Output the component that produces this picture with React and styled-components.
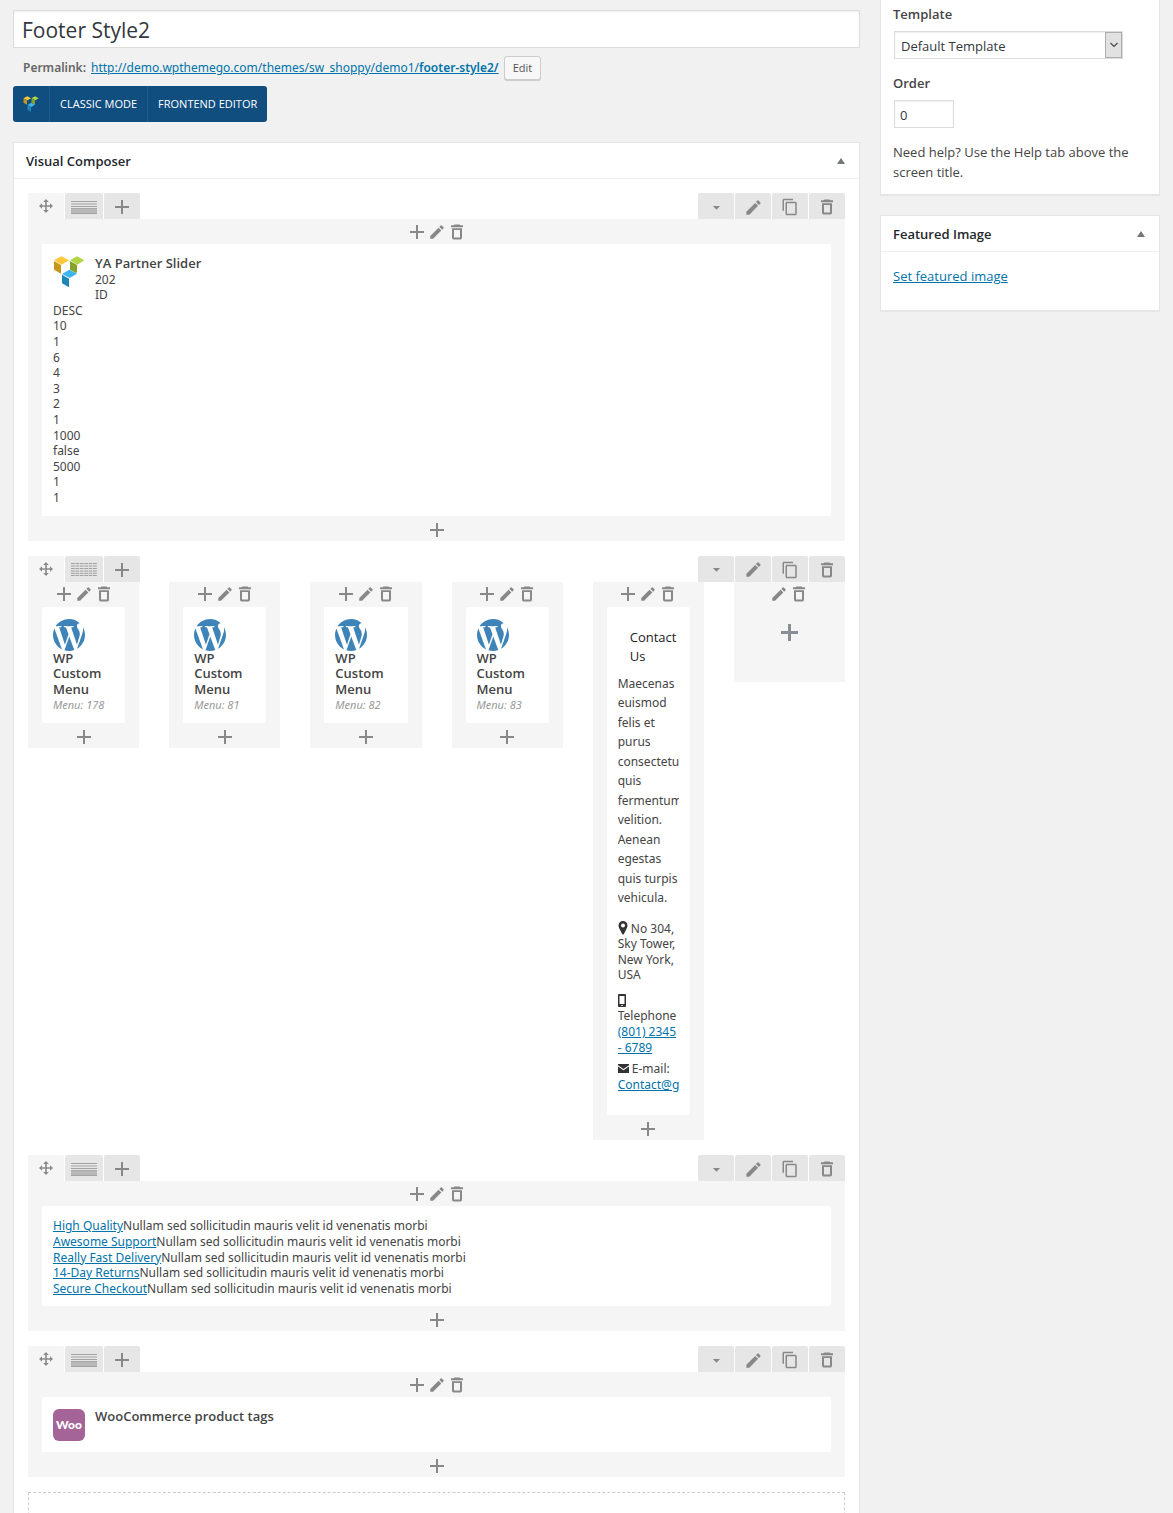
import React from "react";
import styled, { createGlobalStyle, css } from "styled-components";
import { MdEdit, MdContentCopy, MdArrowDropDown } from "react-icons/md";

const uiFont = `"Open Sans", "Noto Sans", sans-serif`;
const contentFont = `"Noto Sans", "Open Sans", sans-serif`;

const GlobalStyle = createGlobalStyle`
  *, *::before, *::after { box-sizing: border-box; }
  body {
    margin: 0;
    background: #f1f1f1;
    color: #444;
    font: 400 13px/20px ${uiFont};
  }
  h1, h2, h3, p, ul { margin: 0; padding: 0; font-weight: 400; }
  a { color: #0073aa; }
  svg { display: block; }
`;

/* ---------- page frame ---------- */

const Page = styled.div`
  height: 100vh;
  overflow-y: auto;
  scrollbar-width: none;
`;

const Columns = styled.div`
  display: grid;
  grid-template-columns: minmax(0, 1fr) 280px;
  gap: 20px;
  align-items: start;
  padding: 0 13px;
`;

const Main = styled.main`
  padding: 10px 0 20px;
`;

const Sidebar = styled.aside`
  display: flex;
  flex-direction: column;
  gap: 20px;
`;

const Card = styled.section`
  background: #fff;
  border: 1px solid #e5e5e5;
  box-shadow: 0 1px 1px rgba(0, 0, 0, 0.04);
  ${(p) => p.$open && css`border-top: 0;`}
`;

const CardHeader = styled.header`
  display: flex;
  align-items: center;
  justify-content: space-between;
  height: 36px;
  padding: 0 12px;
  border-bottom: 1px solid #eee;
`;

const CardTitle = styled.h2`
  color: #23282d;
  font-size: 13px;
  font-weight: 600;
  line-height: 20px;
`;

const BareButton = styled.button`
  display: flex;
  align-items: center;
  justify-content: center;
  padding: 0;
  border: 0;
  background: none;
  color: #888;
  cursor: pointer;
`;

const Toggle = styled(BareButton)`
  width: 12px;
  height: 20px;
  color: #72777c;
`;

/* ---------- title area ---------- */

const TitleInput = styled.input`
  display: block;
  width: 100%;
  height: 38px;
  padding: 1px 8px 0;
  border: 1px solid #ddd;
  background: #fff;
  box-shadow: inset 0 1px 2px rgba(0, 0, 0, 0.07);
  color: #32373c;
  font: 400 21px/35px ${uiFont};
`;

const Permalink = styled.div`
  display: flex;
  align-items: center;
  gap: 5px;
  margin: 8px 0 6px;
  padding: 0 10px;
  color: #666;
  font: 400 12px/24px ${contentFont};

  strong { font-weight: 600; }
`;

const EditButton = styled.button`
  height: 24px;
  padding: 0 8px;
  border: 1px solid #ccc;
  border-radius: 3px;
  background: #f7f7f7;
  box-shadow: 0 1px 0 #ccc;
  color: #555;
  font: 400 11px/22px ${uiFont};
`;

const ModeBar = styled.div`
  display: inline-flex;
  align-items: stretch;
  height: 36px;
  margin-bottom: 20px;
  border-radius: 3px;
  background: #114e80;
  vertical-align: top;
  overflow: hidden;
`;

const ModeLogo = styled.span`
  display: flex;
  align-items: center;
  padding: 0 10px;
`;

const ModeButton = styled.button`
  padding: 0 10px;
  border: 0;
  border-left: 1px solid #215c8f;
  background: none;
  color: #fff;
  font: 400 11px/36px ${uiFont};
  text-transform: uppercase;
`;

/* ---------- composer rows ---------- */

const Composer = styled.div`
  display: flex;
  flex-direction: column;
  gap: 15px;
  padding: 14px;
`;

const RowBar = styled.div`
  display: flex;
  justify-content: space-between;
  height: 26px;
`;

const TabGroup = styled.div`
  display: flex;
  gap: 1px;
`;

const Tab = styled(BareButton)`
  width: ${(p) => (p.$wide ? 38 : 36)}px;
  height: 26px;
  padding-top: ${(p) => (p.$plain ? 0 : 2)}px;
  border-radius: 2px 2px 0 0;
  background: ${(p) => (p.$plain ? "#f5f5f5" : "#e6e6e6")};
`;

const RowBody = styled.div`
  display: flex;
  align-items: flex-start;
  gap: 30px;
`;

const Column = styled.div`
  flex: 1 1 0;
  min-width: 0;
  min-height: 100px;
  padding: 0 14px;
  background: #f5f5f5;
`;

const ColumnBar = styled.div`
  display: flex;
  align-items: center;
  justify-content: center;
  height: 25px;
  padding-top: ${(p) => (p.$bottom ? 3 : 0)}px;
`;

const IconButton = styled(BareButton)`
  width: 20px;
  height: 22px;
`;

const EmptyAdd = styled(BareButton)`
  width: 100%;
  height: 51px;
  color: #8a8f96;
`;

const Element = styled.div`
  display: flow-root;
  min-height: 55px;
  padding: 12px 11px 10px;
  border-radius: 2px;
  background: #fff;
  font: 400 12px/1.3 ${contentFont};
`;

const FloatIcon = styled.span`
  float: left;
  margin-right: 10px;
`;

const ElementName = styled.h3`
  font: 600 13px/1.2 ${uiFont};
`;

const MenuNote = styled.p`
  color: #999;
  font-size: 11px;
  font-style: italic;
  line-height: 16px;
`;

const PlainList = styled.ul`
  list-style: none;
`;

const WooBadge = styled.span`
  float: left;
  width: 32px;
  height: 32px;
  margin-right: 10px;
  border-radius: 6px;
  background: #a46497;
  color: #fff;
  font: 900 12px/31px "Lato", sans-serif;
  text-align: center;
`;

const TextBlock = styled.div`
  overflow: hidden;
  padding-bottom: 13px;
`;

const BlockHeading = styled.h2`
  padding: 9px 12px 8px;
  color: #222;
  font: 400 13px/19px ${uiFont};
`;

const Intro = styled.p`
  line-height: 1.625;
`;

const ContactLine = styled.p`
  margin-top: ${(p) => p.$space}px;

  svg { display: inline-block; vertical-align: -2px; }
`;

const DropArea = styled.div`
  height: 90px;
  border: 1px dashed #ccc;
`;

/* ---------- sidebar form ---------- */

const Attributes = styled.div`
  padding: 4px 12px 12px;
`;

const Label = styled.label`
  display: block;
  margin-bottom: 7px;
  font-weight: 600;
`;

const SelectWrap = styled.div`
  position: relative;
  width: 229px;
  margin: 0 0 14px 1px;
`;

const Select = styled.select`
  display: block;
  width: 100%;
  height: 28px;
  padding: 2px 24px 0 6px;
  border: 1px solid #ddd;
  border-radius: 0;
  background: #fff;
  box-shadow: inset 0 1px 2px rgba(0, 0, 0, 0.07);
  color: #32373c;
  font: 400 13px/24px ${uiFont};
  appearance: none;
`;

const SelectArrow = styled.span`
  position: absolute;
  top: 1px;
  right: 1px;
  bottom: 1px;
  display: flex;
  align-items: center;
  justify-content: center;
  width: 17px;
  border: 1px solid #adadad;
  background: #e1e1e1;
  color: #444;
  pointer-events: none;
`;

const OrderInput = styled.input`
  display: block;
  width: 60px;
  height: 28px;
  margin: 0 0 14px 1px;
  padding: 1px 5px 0;
  border: 1px solid #ddd;
  background: #fff;
  box-shadow: inset 0 1px 2px rgba(0, 0, 0, 0.07);
  color: #32373c;
  font: 400 13px/25px ${uiFont};
`;

const FeaturedBody = styled.div`
  padding: 14px 12px 24px;
`;

/* ---------- drawings ---------- */

const Plus = ({ size = 14, weight = 2 }) => (
  <svg width={size} height={size} viewBox={`0 0 ${size} ${size}`} fill="currentColor" aria-hidden="true">
    <rect x={(size - weight) / 2} y="0" width={weight} height={size} />
    <rect x="0" y={(size - weight) / 2} width={size} height={weight} />
  </svg>
);

const Trash = () => (
  <svg width="12" height="16" viewBox="0 0 12 16" fill="currentColor" aria-hidden="true">
    <path d="M3.5 0.4h5l0.8 0.9H12v1.9H0V1.3h2.7z" />
    <path fillRule="evenodd" d="M1 4.2h10v9.6a1.7 1.7 0 0 1-1.7 1.7H2.7A1.7 1.7 0 0 1 1 13.8zM3 6v7.6h6V6z" />
  </svg>
);

const Triangle = () => (
  <svg width="8" height="6" viewBox="0 0 8 6" fill="currentColor" aria-hidden="true">
    <path d="M4 0L8 6H0z" />
  </svg>
);

const Move = () => (
  <svg width="14" height="14" viewBox="0 0 14 14" fill="#8a8a8a" aria-hidden="true">
    <path d="M7 0l2.8 3H7.8v3.2H11V4.2L14 7l-3 2.8V7.8H7.8V11h2L7 14l-2.8-3h2V7.8H3v2L0 7l3-2.8v2h3.2V3h-2z" />
  </svg>
);

const LayoutSolid = () => (
  <svg width="26" height="13" viewBox="0 0 26 13" aria-hidden="true">
    <rect y="7" width="26" height="5" fill="#b8b8b8" />
    <g fill="#a3a3a3">
      <rect width="26" height="1" />
      <rect y="2.5" width="26" height="1" />
      <rect y="5" width="26" height="1" />
      <rect y="7.2" width="26" height="0.8" />
      <rect y="12" width="26" height="1" />
    </g>
  </svg>
);

const LayoutSplit = () => (
  <svg width="26" height="13" viewBox="0 0 26 13" fill="#a3a3a3" aria-hidden="true">
    {[0, 2.5, 5, 7.5, 9.8, 12].map((y) =>
      [0, 4.4, 8.8, 13.2, 17.6, 22].map((x) => (
        <rect key={`${x}-${y}`} x={x} y={y} width="3.8" height="1.1" />
      ))
    )}
  </svg>
);

const CubeLogo = ({ size = 32 }) => (
  <svg width={size} height={size} viewBox="99 225 96 96" aria-hidden="true">
    <path fill="#ffc73a" d="M102 238l22-12 23 12-22 13z" />
    <path fill="#c6971b" d="M102 240l21 12v26l-21-12z" />
    <path fill="#b2d545" d="M150 238l21-12 22 12-21 13z" />
    <path fill="#86a12c" d="M150 240l21 12v22l-4 2-17-10z" />
    <path fill="#3cb5ef" d="M126 279l22-13 23 12-22 13z" />
    <path fill="#1d86b5" d="M126 281l21 12v26l-21-12z" />
  </svg>
);

const WordPressLogo = () => (
  <svg width="32" height="32" viewBox="1.2 1.2 21.6 21.6" fill="#3f84b9" aria-hidden="true">
    <path d="M21.469 6.825c.84 1.537 1.318 3.3 1.318 5.175 0 3.979-2.156 7.456-5.363 9.325l3.295-9.527c.615-1.54.82-2.771.82-3.864 0-.405-.026-.78-.07-1.11m-7.981.105c.647-.03 1.232-.105 1.232-.105.582-.075.514-.93-.067-.899 0 0-1.755.135-2.88.135-1.064 0-2.85-.15-2.85-.15-.585-.03-.661.855-.075.885 0 0 .54.061 1.125.09l1.68 4.605-2.37 7.08L5.354 6.9c.649-.03 1.234-.1 1.234-.1.585-.075.516-.93-.065-.896 0 0-1.746.138-2.874.138-.2 0-.438-.008-.69-.015C4.911 3.15 8.235 1.215 12 1.215c2.809 0 5.365 1.072 7.286 2.833-.046-.003-.091-.009-.141-.009-1.06 0-1.812.923-1.812 1.914 0 .89.513 1.643 1.06 2.531.411.72.89 1.643.89 2.977 0 .915-.354 1.994-.821 3.479l-1.075 3.585-3.9-11.61.001.014zM12 22.784c-1.059 0-2.081-.153-3.048-.437l3.237-9.406 3.315 9.087c.024.053.05.101.078.149-1.12.393-2.325.609-3.582.609M1.211 12c0-1.564.336-3.05.935-4.39L7.29 21.709C3.694 19.96 1.212 16.271 1.211 12" />
  </svg>
);

const Marker = () => (
  <svg width="10" height="14" viewBox="0 0 9 14" aria-hidden="true">
    <path
      fill="#333"
      fillRule="evenodd"
      d="M4.5 0A4.5 4.5 0 0 1 9 4.5C9 6 8.4 7 7.8 8.2L5.2 13.2a.8.8 0 0 1-1.4 0L1.2 8.2C.6 7 0 6 0 4.5A4.5 4.5 0 0 1 4.5 0zm0 2.500a2 2 0 1 0 0 4 2 2 0 0 0 0-4z"
    />
  </svg>
);

const Phone = () => (
  <svg width="8" height="13" viewBox="0 0 8 13" aria-hidden="true">
    <path
      fill="#333"
      fillRule="evenodd"
      d="M1 0h6a1 1 0 0 1 1 1v11a1 1 0 0 1-1 1H1a1 1 0 0 1-1-1V1a1 1 0 0 1 1-1zm0.5 2v8h5V2zm1.7 9v1h1.6v-1z"
    />
  </svg>
);

const Mail = () => (
  <svg width="11" height="11" viewBox="0 0 11 11" fill="#333" aria-hidden="true">
    <path d="M0 0h11v1.200L5.5 5 0 1.2zM0 2.4l5.5 3.8L11 2.4V9H0z" />
  </svg>
);

const Chevron = () => (
  <svg width="8" height="6" viewBox="0 0 8 6" fill="none" stroke="currentColor" strokeWidth="1.1" aria-hidden="true">
    <path d="M0.5 1L4 4.5 7.5 1" />
  </svg>
);

/* ---------- composed parts ---------- */

function ComposerRow({ split, children }) {
  return (
    <div>
      <RowBar>
        <TabGroup>
          <Tab $plain aria-label="Move row"><Move /></Tab>
          <Tab $wide aria-label="Row layout">{split ? <LayoutSplit /> : <LayoutSolid />}</Tab>
          <Tab aria-label="Add column"><Plus /></Tab>
        </TabGroup>
        <TabGroup>
          <Tab aria-label="Toggle row"><MdArrowDropDown size={17} /></Tab>
          <Tab aria-label="Edit row"><MdEdit size={19} /></Tab>
          <Tab aria-label="Clone row"><MdContentCopy size={18} /></Tab>
          <Tab aria-label="Delete row"><Trash /></Tab>
        </TabGroup>
      </RowBar>
      <RowBody>{children}</RowBody>
    </div>
  );
}

function ComposerColumn({ children }) {
  return (
    <Column>
      <ColumnBar>
        {children && <IconButton aria-label="Prepend element"><Plus /></IconButton>}
        <IconButton aria-label="Edit column"><MdEdit size={18} /></IconButton>
        <IconButton aria-label="Delete column"><Trash /></IconButton>
      </ColumnBar>
      {children ? (
        <>
          <Element>{children}</Element>
          <ColumnBar $bottom>
            <IconButton aria-label="Append element"><Plus /></IconButton>
          </ColumnBar>
        </>
      ) : (
        <EmptyAdd aria-label="Add element"><Plus size={17} weight={3} /></EmptyAdd>
      )}
    </Column>
  );
}

const sliderValues = ["DESC", "10", "1", "6", "4", "3", "2", "1", "1000", "false", "5000", "1", "1"];
const menus = ["178", "81", "82", "83"];
const features = ["High Quality", "Awesome Support", "Really Fast Delivery", "14-Day Returns", "Secure Checkout"];

export default function App() {
  return (
    <Page>
      <GlobalStyle />
      <Columns>
        <Main>
          <TitleInput aria-label="Title" defaultValue="Footer Style2" />
          <Permalink>
            <strong>Permalink:</strong>
            <a href="#permalink">
              http://demo.wpthemego.com/themes/sw_shoppy/demo1/<strong>footer-style2/</strong>
            </a>
            <EditButton>Edit</EditButton>
          </Permalink>
          <ModeBar>
            <ModeLogo><CubeLogo size={16} /></ModeLogo>
            <ModeButton>Classic mode</ModeButton>
            <ModeButton>Frontend editor</ModeButton>
          </ModeBar>

          <Card>
            <CardHeader>
              <CardTitle>Visual Composer</CardTitle>
              <Toggle aria-label="Toggle panel"><Triangle /></Toggle>
            </CardHeader>
            <Composer>
              <ComposerRow>
                <ComposerColumn>
                  <FloatIcon><CubeLogo /></FloatIcon>
                  <ElementName>YA Partner Slider</ElementName>
                  <PlainList>
                    <li>202</li>
                    <li>ID</li>
                    {sliderValues.map((value, i) => <li key={i}>{value}</li>)}
                  </PlainList>
                </ComposerColumn>
              </ComposerRow>

              <ComposerRow split>
                {menus.map((id) => (
                  <ComposerColumn key={id}>
                    <WordPressLogo />
                    <ElementName>WP Custom Menu</ElementName>
                    <MenuNote>Menu: {id}</MenuNote>
                  </ComposerColumn>
                ))}
                <ComposerColumn>
                  <TextBlock>
                    <BlockHeading>Contact Us</BlockHeading>
                    <Intro>
                      Maecenas euismod felis et purus consectetur quis fermentum velition. Aenean egestas quis
                      turpis vehicula.
                    </Intro>
                    <ContactLine $space={13}>
                      <Marker /> No 304, Sky Tower, New York, USA
                    </ContactLine>
                    <ContactLine $space={10}>
                      <Phone /> Telephone <a href="#call">(801) 2345 - 6789</a>
                    </ContactLine>
                    <ContactLine $space={6}>
                      <Mail /> E-mail: <a href="#mail">Contact@gmail.com</a>
                    </ContactLine>
                  </TextBlock>
                </ComposerColumn>
                <ComposerColumn />
              </ComposerRow>

              <ComposerRow>
                <ComposerColumn>
                  <PlainList>
                    {features.map((name) => (
                      <li key={name}>
                        <a href="#feature">{name}</a>Nullam sed sollicitudin mauris velit id venenatis morbi
                      </li>
                    ))}
                  </PlainList>
                </ComposerColumn>
              </ComposerRow>

              <ComposerRow>
                <ComposerColumn>
                  <WooBadge>Woo</WooBadge>
                  <ElementName>WooCommerce product tags</ElementName>
                </ComposerColumn>
              </ComposerRow>

              <DropArea />
            </Composer>
          </Card>
        </Main>

        <Sidebar>
          <Card $open>
            <Attributes>
              <Label htmlFor="template">Template</Label>
              <SelectWrap>
                <Select id="template"><option>Default Template</option></Select>
                <SelectArrow><Chevron /></SelectArrow>
              </SelectWrap>
              <Label htmlFor="order">Order</Label>
              <OrderInput id="order" defaultValue="0" />
              <p>Need help? Use the Help tab above the screen title.</p>
            </Attributes>
          </Card>
          <Card>
            <CardHeader>
              <CardTitle>Featured Image</CardTitle>
              <Toggle aria-label="Toggle panel"><Triangle /></Toggle>
            </CardHeader>
            <FeaturedBody>
              <a href="#featured">Set featured image</a>
            </FeaturedBody>
          </Card>
        </Sidebar>
      </Columns>
    </Page>
  );
}
